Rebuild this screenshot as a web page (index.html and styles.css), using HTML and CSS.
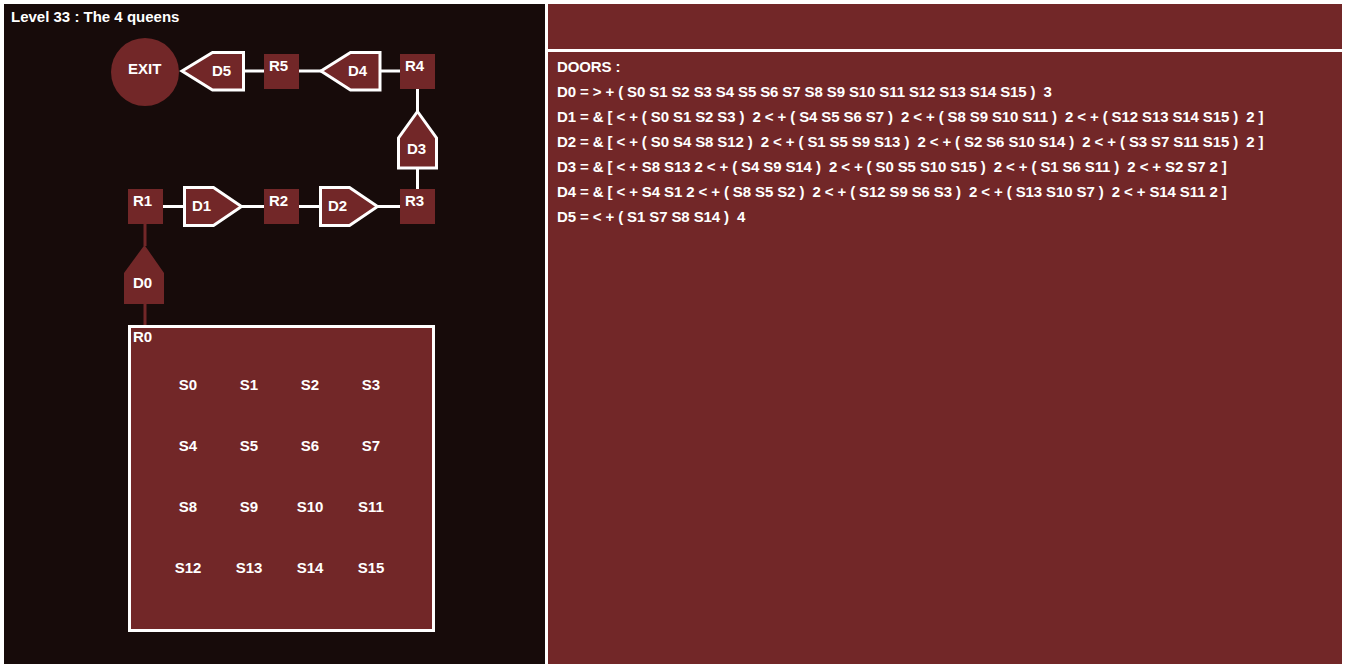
FILE: index.html
```html
<!DOCTYPE html>
<html>
<head>
<meta charset="utf-8">
<link rel="stylesheet" href="styles.css">
</head>
<body>
<div class="app">
  <div class="map">
    <svg class="diagram" width="541" height="660" viewBox="4 4 541 660" xmlns="http://www.w3.org/2000/svg">
      <text class="title" x="11" y="22">Level 33 : The 4 queens</text>

      <!-- connectors -->
      <g class="wire">
        <line x1="243" y1="71" x2="264" y2="71"/>
        <line x1="299" y1="71" x2="321" y2="71"/>
        <line x1="380" y1="71" x2="400" y2="71"/>
        <line x1="417.5" y1="89" x2="417.5" y2="112"/>
        <line x1="417.5" y1="169" x2="417.5" y2="189"/>
        <line x1="163" y1="206.5" x2="184" y2="206.5"/>
        <line x1="242" y1="206.5" x2="264" y2="206.5"/>
        <line x1="299" y1="206.5" x2="320" y2="206.5"/>
        <line x1="378" y1="206.5" x2="400" y2="206.5"/>
      </g>
      <g class="wire-red">
        <line x1="145" y1="223" x2="145" y2="246"/>
        <line x1="145" y1="303" x2="145" y2="327"/>
      </g>

      <!-- exit -->
      <circle class="fill" cx="145" cy="72" r="34"/>
      <text class="lbl" x="128" y="74">EXIT</text>

      <!-- doors -->
      <polygon class="door" points="182,71 212.5,52.5 243.5,52.5 243.5,90 212.5,90"/>
      <text class="lbl" x="212" y="76">D5</text>
      <polygon class="door" points="321,71 350.5,52.5 380,52.5 380,90 350.5,90"/>
      <text class="lbl" x="348" y="76">D4</text>
      <polygon class="door" points="417.5,111.5 436.5,138 436.5,168 398.5,168 398.5,138"/>
      <text class="lbl" x="407" y="154">D3</text>
      <polygon class="door" points="184.5,187.5 213.5,187.5 241.5,206.5 213.5,225.5 184.5,225.5"/>
      <text class="lbl" x="192" y="211">D1</text>
      <polygon class="door" points="320.5,187.5 349.5,187.5 377.5,206.5 349.5,225.5 320.5,225.5"/>
      <text class="lbl" x="328" y="211">D2</text>
      <polygon class="fill" points="144.5,245 164,273 164,304 124,304 124,273"/>
      <text class="lbl" x="133" y="288">D0</text>

      <!-- rooms -->
      <rect class="fill" x="264" y="54" width="35" height="35"/>
      <text class="lbl" x="269" y="71">R5</text>
      <rect class="fill" x="400" y="54" width="35" height="35"/>
      <text class="lbl" x="405" y="71">R4</text>
      <rect class="fill" x="128" y="189" width="35" height="35"/>
      <text class="lbl" x="133" y="206">R1</text>
      <rect class="fill" x="264" y="189" width="35" height="35"/>
      <text class="lbl" x="269" y="206">R2</text>
      <rect class="fill" x="400" y="189" width="35" height="35"/>
      <text class="lbl" x="405" y="206">R3</text>

      <!-- big room -->
      <rect class="room" x="129.5" y="326.5" width="304" height="304"/>
      <text class="lbl" x="133" y="342">R0</text>
      <g class="cells">
        <text x="188" y="390">S0</text><text x="249" y="390">S1</text><text x="310" y="390">S2</text><text x="371" y="390">S3</text>
        <text x="188" y="451">S4</text><text x="249" y="451">S5</text><text x="310" y="451">S6</text><text x="371" y="451">S7</text>
        <text x="188" y="512">S8</text><text x="249" y="512">S9</text><text x="310" y="512">S10</text><text x="371" y="512">S11</text>
        <text x="188" y="573">S12</text><text x="249" y="573">S13</text><text x="310" y="573">S14</text><text x="371" y="573">S15</text>
      </g>
    </svg>
  </div>
  <div class="side">
    <div class="side-head"></div>
    <div class="side-body">
      <div class="line">DOORS :</div>
      <div class="line">D0 = &gt; + ( S0 S1 S2 S3 S4 S5 S6 S7 S8 S9 S10 S11 S12 S13 S14 S15 )  3</div>
      <div class="line">D1 = &amp; [ &lt; + ( S0 S1 S2 S3 )  2 &lt; + ( S4 S5 S6 S7 )  2 &lt; + ( S8 S9 S10 S11 )  2 &lt; + ( S12 S13 S14 S15 )  2 ]</div>
      <div class="line">D2 = &amp; [ &lt; + ( S0 S4 S8 S12 )  2 &lt; + ( S1 S5 S9 S13 )  2 &lt; + ( S2 S6 S10 S14 )  2 &lt; + ( S3 S7 S11 S15 )  2 ]</div>
      <div class="line">D3 = &amp; [ &lt; + S8 S13 2 &lt; + ( S4 S9 S14 )  2 &lt; + ( S0 S5 S10 S15 )  2 &lt; + ( S1 S6 S11 )  2 &lt; + S2 S7 2 ]</div>
      <div class="line">D4 = &amp; [ &lt; + S4 S1 2 &lt; + ( S8 S5 S2 )  2 &lt; + ( S12 S9 S6 S3 )  2 &lt; + ( S13 S10 S7 )  2 &lt; + S14 S11 2 ]</div>
      <div class="line">D5 = &lt; + ( S1 S7 S8 S14 )  4</div>
    </div>
  </div>
</div>
</body>
</html>
```
FILE: styles.css
```css
html, body {
  margin: 0;
  padding: 0;
  background: #ffffff;
}
body {
  font-family: "Liberation Sans", Arial, sans-serif;
  font-weight: bold;
  font-size: 15px;
  color: #ffffff;
}
.app {
  display: flex;
  gap: 3px;
  padding: 4px;
  height: 660px;
}
.map {
  width: 541px;
  height: 660px;
  background: #170b0a;
  flex: none;
}
.diagram {
  display: block;
}
.diagram text {
  font-family: "Liberation Sans", Arial, sans-serif;
  font-weight: bold;
  font-size: 15px;
  fill: #ffffff;
}
.diagram .cells text {
  text-anchor: middle;
}
.wire line {
  stroke: #ffffff;
  stroke-width: 3;
}
.wire-red line {
  stroke: #722728;
  stroke-width: 3;
}
.fill {
  fill: #722728;
}
.door {
  fill: #722728;
  stroke: #ffffff;
  stroke-width: 3;
  stroke-linejoin: miter;
}
.room {
  fill: #722728;
  stroke: #ffffff;
  stroke-width: 3;
}
.side {
  flex: 1;
  display: flex;
  flex-direction: column;
  gap: 3px;
}
.side-head {
  height: 45px;
  background: #722728;
}
.side-body {
  flex: 1;
  background: #722728;
  padding: 2px 0 0 9px;
}
.line {
  white-space: pre;
  line-height: 25px;
  letter-spacing: -0.11px;
}
```
